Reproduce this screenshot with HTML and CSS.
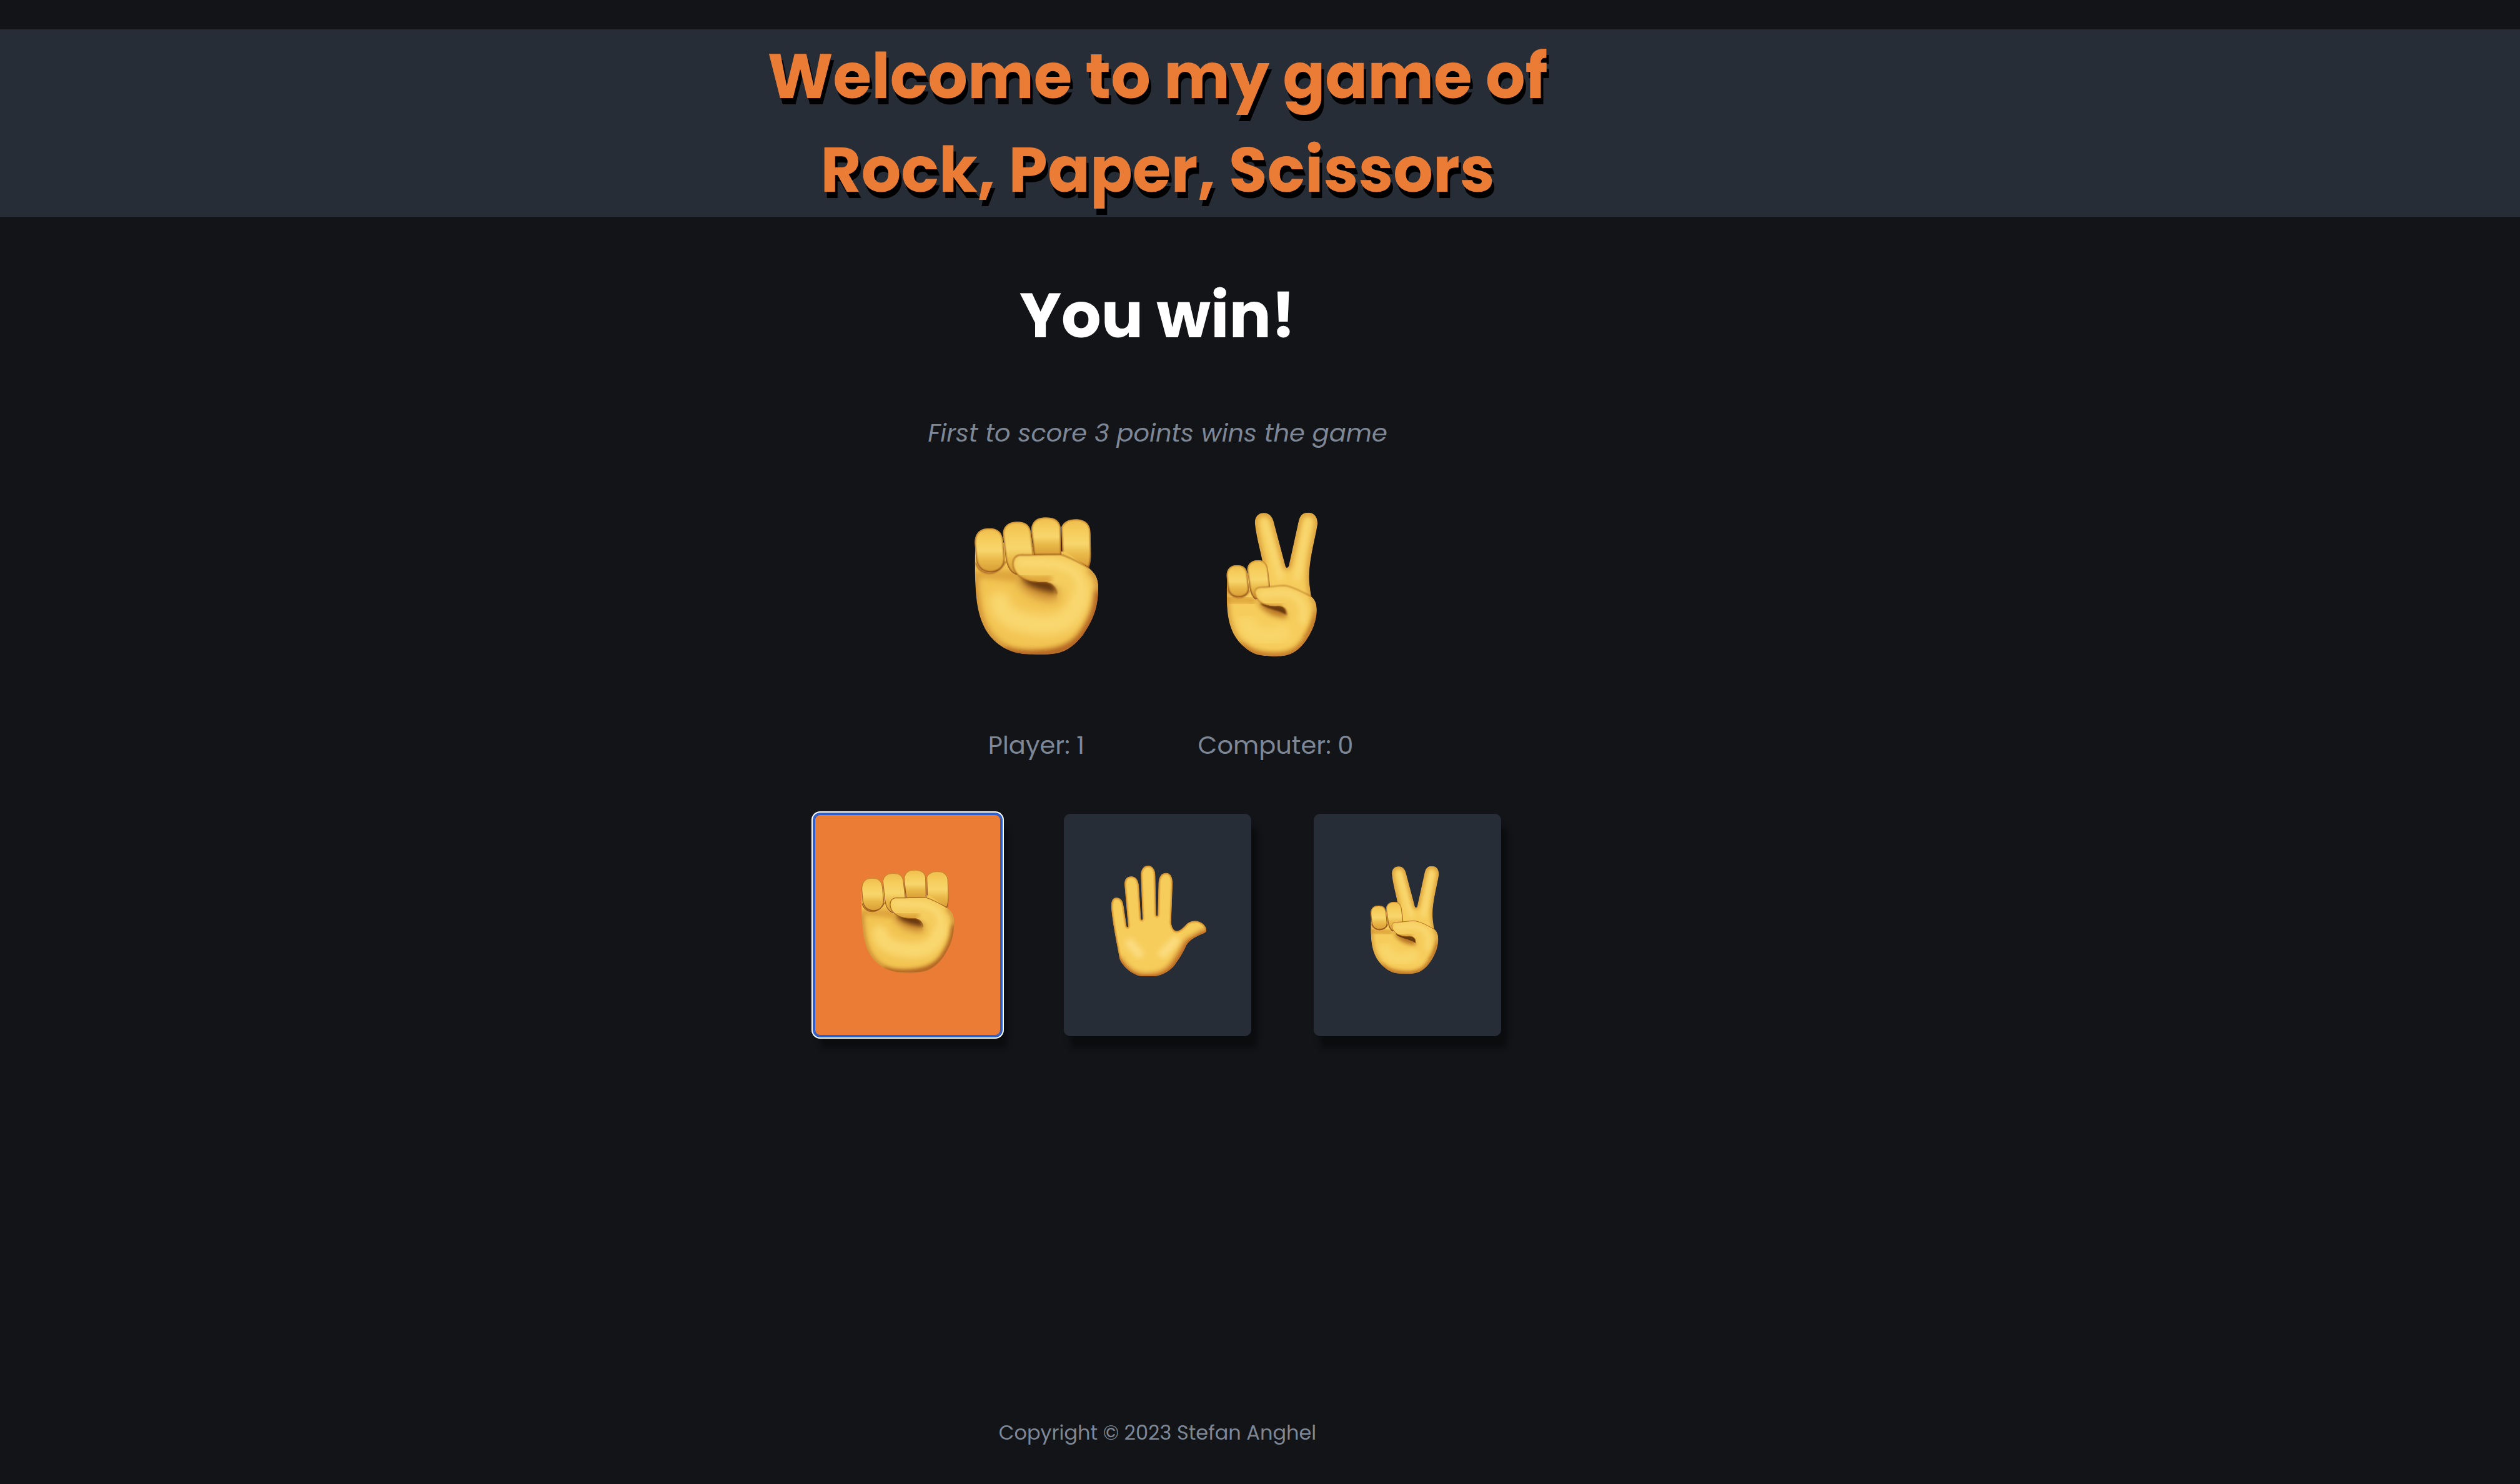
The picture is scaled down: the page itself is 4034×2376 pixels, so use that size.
FILE: index.html
```html
<!DOCTYPE html>
<html lang="en">
<head>
<meta charset="utf-8">
<meta name="viewport" content="width=device-width, initial-scale=1">
<title>Rock, Paper, Scissors</title>
<link rel="stylesheet" href="styles.css">
</head>
<body>
<svg class="defs" width="0" height="0" aria-hidden="true">
  <defs>
    <filter id="soft4" x="-30%" y="-30%" width="160%" height="160%"><feGaussianBlur stdDeviation="3"/></filter>
    <filter id="soft12" x="-50%" y="-50%" width="200%" height="200%"><feGaussianBlur stdDeviation="12"/></filter>
    <filter id="soft24" x="-50%" y="-50%" width="200%" height="200%"><feGaussianBlur stdDeviation="22"/></filter>
    <linearGradient id="finger" x1="0" y1="0" x2="0" y2="1">
      <stop offset="0" stop-color="#efbd4c"/>
      <stop offset=".25" stop-color="#f5cd5c"/>
      <stop offset=".5" stop-color="#f8d66c"/>
      <stop offset=".72" stop-color="#e9b848"/>
      <stop offset="1" stop-color="#d89c35"/>
    </linearGradient>
    <linearGradient id="fingerEdge" x1="0" y1="0" x2="0" y2="1">
      <stop offset="0" stop-color="#c98a2e"/>
      <stop offset="1" stop-color="#8a4a1a"/>
    </linearGradient>
    <linearGradient id="rockThumbFill" gradientUnits="userSpaceOnUse" x1="0" y1="420" x2="0" y2="520">
      <stop offset="0" stop-color="#f5cd5f"/>
      <stop offset="1" stop-color="#f5cd5f" stop-opacity="0"/>
    </linearGradient>
    <linearGradient id="peaceThumbFill" gradientUnits="userSpaceOnUse" x1="0" y1="530" x2="0" y2="610">
      <stop offset="0" stop-color="#f5cc5d"/>
      <stop offset="1" stop-color="#f5cc5d" stop-opacity="0"/>
    </linearGradient>

    <path id="rockPalm" d="M124 215C120 320 121 410 128 490C136 580 160 640 195 685C240 735 290 765 370 771C420 774 455 773 490 770C560 765 600 728 640 680C690 605 714 550 714 450C714 410 700 385 670 358L560 280Z"/>
    <path id="rockThumb" d="M305 345C303 312 318 295 345 294C400 298 460 290 535 293C585 308 630 335 670 358C705 385 714 415 714 450C712 540 690 590 650 640C600 680 560 680 515 640L515 482C513 445 485 425 455 425C370 428 315 400 305 345Z"/>
    <clipPath id="rockPalmClip"><use href="#rockPalm"/></clipPath>
    <clipPath id="rockThumbClip"><use href="#rockThumb"/></clipPath>
    <path id="rf1" d="M121 240C120 190 145 166 190 166C238 166 252 190 258 225L265 310C265 350 240 378 197 378C155 378 128 350 126 300Z"/>
    <path id="rf2" d="M256 190C260 150 290 135 325 135C370 135 387 155 392 190L405 300L380 370L320 390C290 380 272 345 268 300Z"/>
    <path id="rf3" d="M392 170C396 132 420 114 462 114C505 114 530 130 534 165L538 297L405 297Z"/>
    <path id="rf4" d="M537 160C550 133 575 123 605 123C650 123 677 145 677 190L680 290C680 325 674 345 669 358L542 296Z"/>
    <clipPath id="rf1c"><use href="#rf1"/></clipPath>
    <clipPath id="rf2c"><use href="#rf2"/></clipPath>
    <clipPath id="rf3c"><use href="#rf3"/></clipPath>
    <clipPath id="rf4c"><use href="#rf4"/></clipPath>

    <symbol id="rock" viewBox="57 80 720 720">
      <g clip-path="url(#rf4c)"><use href="#rf4" fill="url(#finger)"/><use href="#rf4" class="finger-edge"/></g>
      <g clip-path="url(#rockPalmClip)">
        <use href="#rockPalm" fill="#f2c452"/>
        <path d="M110 370H330V420C260 425 200 400 110 410Z" fill="#dfa63c" filter="url(#soft12)"/>
        <path d="M240 520C250 590 320 620 430 630C560 640 620 580 640 430" fill="none" stroke="#f9d76f" stroke-width="100" stroke-linecap="round" filter="url(#soft24)"/>
        <path d="M320 405C350 480 440 520 515 510L530 440L440 400Z" fill="#c98930" filter="url(#soft24)"/>
        <path d="M340 395C370 450 430 462 510 478C518 440 500 420 460 412Z" fill="#67380f" filter="url(#soft12)"/>
      </g>
      <g clip-path="url(#rf3c)"><use href="#rf3" fill="url(#finger)"/><use href="#rf3" class="finger-edge"/></g>
      <g clip-path="url(#rf2c)"><use href="#rf2" fill="url(#finger)"/><use href="#rf2" class="finger-edge"/></g>
      <path d="M126 330C145 400 235 400 268 325" fill="none" stroke="#a9641f" stroke-width="7" filter="url(#soft4)"/>
      <g clip-path="url(#rf1c)"><use href="#rf1" fill="url(#finger)"/><use href="#rf1" class="finger-edge"/></g>
      <g clip-path="url(#rockThumbClip)">
        <use href="#rockThumb" fill="url(#rockThumbFill)"/>
        <path d="M330 400C400 425 440 408 490 412" fill="none" stroke="#dda238" stroke-width="34" filter="url(#soft12)"/>
        <path d="M345 330C430 340 510 320 590 370C640 410 640 470 620 520" fill="none" stroke="#f9d76f" stroke-width="46" stroke-linecap="round" filter="url(#soft12)"/>
      </g>
      <path d="M670 358C630 335 585 308 535 293C460 290 400 298 345 294C318 295 303 312 305 345C315 400 370 428 455 425C485 425 513 445 515 482" fill="none" stroke="#a4611f" stroke-width="5" filter="url(#soft4)"/>
      <g clip-path="url(#rockPalmClip)">
        <path d="M122 400C124 460 126 480 128 490C136 580 160 640 195 685C240 735 290 765 370 771C420 774 455 773 490 770C560 765 600 728 640 680C690 605 714 550 714 450C714 410 700 385 670 358" fill="none" stroke="#c47d2c" stroke-width="32" filter="url(#soft12)" opacity=".75"/>
        <path d="M260 755C330 785 560 790 640 680C690 605 714 550 716 470" fill="none" stroke="#a9561f" stroke-width="36" filter="url(#soft12)" opacity=".85"/>
      </g>
    </symbol>

    <path id="peaceHand" d="M134 400C130 470 130 540 138 590C150 660 175 700 210 732C250 768 280 780 350 781C420 782 445 772 480 742C520 705 563 630 563 560C563 525 550 505 537 495C530 450 526 420 527 390C530 300 560 200 567 145C568 110 550 91 522 91C495 91 482 105 475 140L430 345C425 360 415 360 412 345L359 145C352 110 335 93 310 93C280 93 264 115 267 145C272 200 290 260 305 335L240 380Z"/>
    <clipPath id="peaceClip"><use href="#peaceHand"/></clipPath>
    <path id="pf1" d="M130 395C130 360 150 343 181 343C213 343 227 358 230 385L238 455C238 480 220 498 188 498C155 498 138 475 135 445Z"/>
    <path id="pf2" d="M229 365C231 335 252 319 282 319C312 319 326 335 330 365L340 447L300 500L268 508C248 490 241 465 238 430Z"/>
    <clipPath id="pf1c"><use href="#pf1"/></clipPath>
    <clipPath id="pf2c"><use href="#pf2"/></clipPath>
    <path id="peaceThumb" d="M267 480C265 460 275 451 295 450C335 450 380 441 410 441C455 448 500 475 537 495C556 510 563 530 563 560C560 620 540 660 510 690C470 690 440 670 420 640L420 585C420 555 405 539 375 540C320 545 275 520 267 480Z"/>
    <clipPath id="peaceThumbClip"><use href="#peaceThumb"/></clipPath>

    <symbol id="scissors" viewBox="6 80 720 720">
      <g clip-path="url(#peaceClip)">
        <use href="#peaceHand" fill="#f6cd5c"/>
        <path d="M315 135L390 400M520 130L470 400" fill="none" stroke="#f9d871" stroke-width="34" stroke-linecap="round" filter="url(#soft12)"/>
        <path d="M120 505C190 520 230 500 270 520" fill="none" stroke="#dfa53b" stroke-width="36" filter="url(#soft12)"/>
        <path d="M225 620C250 690 330 700 400 670" fill="none" stroke="#f9d76c" stroke-width="70" stroke-linecap="round" filter="url(#soft24)"/>
        <path d="M280 520C310 575 370 595 420 595L415 550Z" fill="#b67326" stroke="#d2942f" stroke-width="8" filter="url(#soft12)"/>
        <path d="M290 528C330 558 375 556 416 582C420 555 405 535 375 535Z" fill="#6b3a10" filter="url(#soft4)"/>
        <use href="#peaceHand" fill="none" stroke="#cb872c" stroke-width="18" filter="url(#soft12)"/>
        <path d="M200 728C250 790 450 810 500 722C540 670 563 620 563 560" fill="none" stroke="#b9681f" stroke-width="30" filter="url(#soft12)" opacity=".8"/>
      </g>
      <g clip-path="url(#pf2c)"><use href="#pf2" fill="url(#finger)"/><use href="#pf2" class="finger-edge"/></g>
      <path d="M136 460C155 512 220 510 240 465" fill="none" stroke="#a9641f" stroke-width="6" filter="url(#soft4)"/>
      <g clip-path="url(#pf1c)"><use href="#pf1" fill="url(#finger)"/><use href="#pf1" class="finger-edge"/></g>
      <g clip-path="url(#peaceThumbClip)">
        <use href="#peaceThumb" fill="url(#peaceThumbFill)"/>
        <path d="M290 530C340 545 370 525 400 535" fill="none" stroke="#dea33a" stroke-width="22" filter="url(#soft12)"/>
        <path d="M300 482C360 480 410 460 470 500C505 530 505 570 495 610" fill="none" stroke="#f9d76f" stroke-width="36" stroke-linecap="round" filter="url(#soft12)"/>
        <path d="M537 495C563 515 566 570 560 600C545 650 530 670 510 700" fill="none" stroke="#c07a28" stroke-width="14" filter="url(#soft12)"/>
      </g>
      <path d="M537 495C500 475 455 448 410 441C380 441 335 450 295 450C275 451 265 460 267 480C275 520 320 545 375 540C405 539 420 555 420 585" fill="none" stroke="#b06d22" stroke-width="4" filter="url(#soft4)"/>
    </symbol>

    <path id="openHand" d="M297 520C296 490 302 472 321 472C343 472 353 488 356 515L370 608C372 615 378 615 378 608L361 415C358 385 370 370 393 370C416 370 427 390 429 415L439 572C440 580 447 580 447 572L439 365C438 340 450 318 473 318C497 318 508 340 508 365L512 552C513 562 520 562 520 552L524 400C526 370 538 353 560 353C583 353 592 378 591 405L584 590C587 620 600 632 612 632C630 630 640 618 660 597C675 584 695 582 710 584C735 590 752 608 753 625C754 638 745 640 735 645C700 660 675 672 657 700C640 740 615 775 597 800C570 830 530 849 495 849H440C395 840 350 800 337 765C325 700 302 590 297 520Z"/>
    <clipPath id="openClip"><use href="#openHand"/></clipPath>
    <symbol id="paper" viewBox="249 312 540 540">
      <g clip-path="url(#openClip)">
        <use href="#openHand" fill="#f6cd5b"/>
        <path d="M385 690L430 740M605 680L545 740" fill="none" stroke="#fbdc80" stroke-width="44" stroke-linecap="round" filter="url(#soft12)"/>
        <use href="#openHand" fill="none" stroke="#d28c2c" stroke-width="12" filter="url(#soft4)"/>
        <path d="M325 765C370 850 430 862 490 856C570 850 600 810 665 690L760 635" fill="none" stroke="#bd6a22" stroke-width="38" filter="url(#soft12)"/>
      </g>
    </symbol>
  </defs>
</svg>

<header class="banner">
  <h1 class="title">Welcome to my game of<br>Rock, Paper, Scissors</h1>
</header>

<main class="game">
  <h2 class="result">You win!</h2>
  <p class="rule">First to score 3 points wins the game</p>

  <section class="scoreboard" aria-label="Score">
    <div class="side side-player">
      <svg class="hand" role="img" aria-label="Rock"><use href="#rock"/></svg>
      <p class="score">Player: 1</p>
    </div>
    <div class="side side-computer">
      <svg class="hand" role="img" aria-label="Scissors"><use href="#scissors"/></svg>
      <p class="score">Computer: 0</p>
    </div>
  </section>

  <div class="choices">
    <button class="choice is-active" type="button" aria-label="Rock"><svg class="choice-hand"><use href="#rock"/></svg></button>
    <button class="choice" type="button" aria-label="Paper"><svg class="choice-hand"><use href="#paper"/></svg></button>
    <button class="choice" type="button" aria-label="Scissors"><svg class="choice-hand"><use href="#scissors"/></svg></button>
  </div>
</main>

<footer class="footer">Copyright © 2023 Stefan Anghel</footer>
</body>
</html>
```

FILE: styles.css
```css
:root {
  --bg: #131418;
  --panel: #272d36;
  --accent: #eb7c36;
  --muted: #7d8796;
  --right-space: 328px;
}

* {
  box-sizing: border-box;
}

body {
  margin: 0;
  min-height: 100vh;
  padding-top: 47px;
  display: flex;
  flex-direction: column;
  background: var(--bg);
  color: var(--muted);
  font-family: Poppins, Inter, "Open Sans", sans-serif;
  font-size: 40px;
  line-height: 60px;
  text-align: center;
}

h1, h2, p {
  margin: 0;
}

.defs {
  position: absolute;
}

.finger-edge {
  fill: none;
  stroke: url(#fingerEdge);
  stroke-width: 10px;
  filter: url(#soft4);
}

.banner {
  padding-right: var(--right-space);
  background: var(--panel);
}

.title {
  color: var(--accent);
  font-size: 100px;
  font-weight: 700;
  line-height: 150px;
  text-shadow: 4px 10px 0 #000;
}

.game {
  display: flex;
  flex-direction: column;
  align-items: center;
  padding: 83px var(--right-space) 0 0;
}

.result {
  color: #fff;
  font-size: 100px;
  font-weight: 700;
  line-height: 150px;
}

.rule {
  margin-top: 83px;
  font-style: italic;
}

.scoreboard {
  display: flex;
  gap: 138px;
  margin-top: 94px;
}

.side {
  display: flex;
  flex-direction: column;
  align-items: center;
  gap: 106px;
}

.side-player {
  width: 240px;
}

.side-computer {
  width: 250px;
}

.hand {
  display: block;
  width: 240px;
  height: 240px;
}

.score {
  white-space: nowrap;
}

.choices {
  display: flex;
  gap: 100px;
  margin-top: 80px;
}

.choice {
  display: flex;
  align-items: center;
  justify-content: center;
  width: 300px;
  height: 356px;
  padding: 0 0 14px;
  border: 0;
  border-radius: 10px;
  background: var(--panel);
  box-shadow: 10px 20px 10px rgba(0, 0, 0, .4);
  cursor: pointer;
}

.choice.is-active {
  background: var(--accent);
  box-shadow:
    inset 0 0 0 2px #2a5fcd,
    0 0 0 2px #2a5fcd,
    0 0 0 4px #fff,
    10px 20px 10px rgba(0, 0, 0, .4);
}

.choice-hand {
  display: block;
  width: 180px;
  height: 180px;
}

.footer {
  margin-top: auto;
  padding: 0 var(--right-space) 58px 0;
  font-size: 32px;
  line-height: 48px;
}
```
